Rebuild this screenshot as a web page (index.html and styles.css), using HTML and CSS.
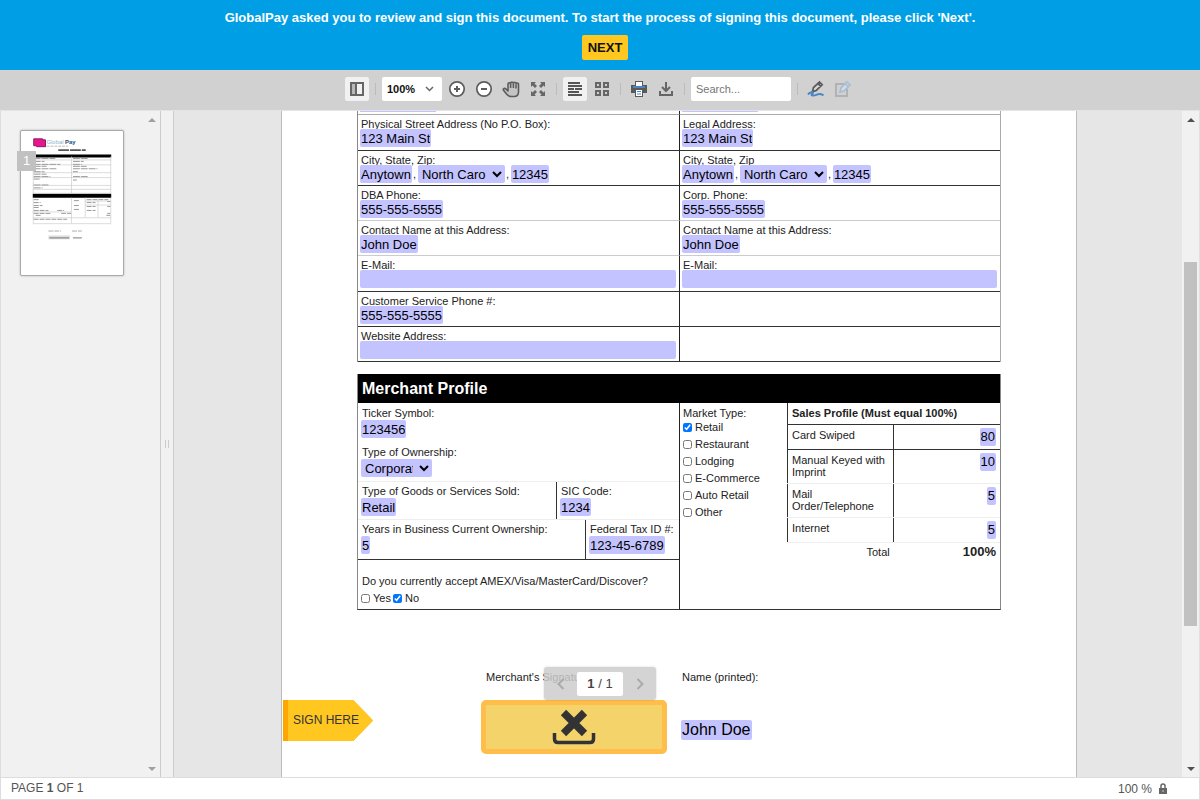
FILE: index.html
```html
<!DOCTYPE html>
<html lang="en">

<head>
    <meta charset="utf-8">
    <title>GlobalPay - Sign document</title>
    <link rel="stylesheet" href="styles.css">
</head>

<body>

    <header class="banner">
        <p>GlobalPay asked you to review and sign this document. To start the process of signing this document, please click 'Next'.</p>
        <button class="next">NEXT</button>
    </header>

    <nav class="toolbar">
        <button class="tool active" aria-label="Toggle panel">
            <svg width="16" height="16" viewBox="0 0 16 16"><path d="M2 2h5v12H2z" fill="#b9b9b9"/><path d="M2 2h12v12H2zM7 2v12" fill="none" stroke="#666" stroke-width="2"/></svg>
        </button>
        <span class="divider"></span>
        <div class="tools">
            <div class="zoom">
                <select aria-label="Zoom"><option>100%</option></select>
                <svg width="9" height="6" viewBox="0 0 9 6"><path d="M1 1l3.500 3.500L8 1" fill="none" stroke="#666" stroke-width="1.500"/></svg>
            </div>
            <button class="tool" aria-label="Zoom in">
                <svg width="18" height="18" viewBox="0 0 18 18"><circle cx="9" cy="9" r="7.200" fill="#fff" stroke="#5c5c5c" stroke-width="1.700"/><path d="M6 9h6M9 6v6" stroke="#5c5c5c" stroke-width="2"/></svg>
            </button>
            <button class="tool" aria-label="Zoom out">
                <svg width="18" height="18" viewBox="0 0 18 18"><circle cx="9" cy="9" r="7.200" fill="#fff" stroke="#5c5c5c" stroke-width="1.700"/><path d="M6 9h6" stroke="#5c5c5c" stroke-width="2"/></svg>
            </button>
            <button class="tool" aria-label="Pan">
                <svg width="18" height="18" viewBox="0 0 18 18"><path d="M6 9.500V4q0-1.300 1.300-1.300T8.600 4q0-2 1.400-2t1.400 1.700q0-1.400 1.400-1.400t1.400 1.700q0-1 1.200-1T16.500 4.500V12q0 4.500-4.500 4.500H9.500q-3 0-5-2.500L1.500 10.300q-.6-1.200.5-1.700t1.800.3L6 11z" fill="#c4c4c4" stroke="#5c5c5c" stroke-width="1.600" stroke-linejoin="round"/><path d="M8.600 4v4M11.400 4v4M14 4.500V8.500" stroke="#5c5c5c" stroke-width="1.500"/></svg>
            </button>
            <button class="tool" aria-label="Full screen">
                <svg width="16" height="16" viewBox="0 0 16 16"><path d="M1 1h5L4.500 2.500 7 5 5 7 2.500 4.500 1 6zM15 1h-5l1.500 1.500L9 5l2 2 2.500-2.500L15 6zM1 15h5l-1.500-1.500L7 11 5 9l-2.500 2.500L1 10zM15 15h-5l1.500-1.500L9 11l2-2 2.500 2.500L15 10z" fill="#666"/></svg>
            </button>
        </div>
        <span class="divider"></span>
        <div class="tools">
            <button class="tool active" aria-label="Single page">
                <svg width="14" height="14" viewBox="0 0 14 14"><path d="M0 1h12M0 4h14M0 7h6M7 7h7M0 10h11M0 13h14" stroke="#555" stroke-width="2"/></svg>
            </button>
            <button class="tool" aria-label="Thumbnails">
                <svg width="16" height="16" viewBox="0 0 16 16"><path d="M2 2h4v4H2zM10 2h4v4h-4zM2 10h4v4H2zM10 10h4v4h-4z" fill="none" stroke="#666" stroke-width="2"/></svg>
            </button>
        </div>
        <span class="divider"></span>
        <div class="tools">
            <button class="tool" aria-label="Print">
                <svg width="16" height="16" viewBox="0 0 16 16"><path d="M0 4h16v8H0z" fill="#5a5a5a"/><path d="M4 0h8v5H4z" fill="#5a5a5a"/><path d="M5 1h6v4H5z" fill="#fff"/><path d="M2 6h12" stroke="#4a86c5" stroke-width="2"/><path d="M4 9h8v7H4z" fill="#5a5a5a"/><path d="M5 9h6v6H5z" fill="#fff"/><path d="M6 10.500h4M6 13h4" stroke="#4a86c5"/></svg>
            </button>
            <button class="tool" aria-label="Download">
                <svg width="16" height="16" viewBox="0 0 16 16"><path d="M8 1v9M4 6l4 4 4-4M2 10v4h12v-4" fill="none" stroke="#666" stroke-width="2"/></svg>
            </button>
        </div>
        <span class="divider"></span>
        <input class="search" type="text" placeholder="Search..." aria-label="Search">
        <span class="divider"></span>
        <div class="tools">
            <button class="tool" aria-label="Sign">
                <svg width="18" height="18" viewBox="0 0 18 18"><path d="M5.500 11.500l1-4L12.500 2l2.700 2.700L9 10.700zM11 3.700l2.700 2.700" fill="#d8d8d8" stroke="#5c5c5c" stroke-width="1.700"/><path d="M1 14.500c1.500-2.500 6-3 5-1.500-1 1.300-2.500 2-.5 2.500 3 .5 4-1.500 7-1.500 2 0 2.500.5 4 1.300" fill="none" stroke="#4a86c5" stroke-width="1.900"/></svg>
            </button>
            <button class="tool" aria-label="Edit" disabled>
                <svg width="18" height="18" viewBox="0 0 18 18"><path d="M13 9v7H2V4h8" fill="none" stroke="#b2b2b2" stroke-width="2"/><path d="M6 12l1-4 6-6 3 3-6 6zM11.500 4l3 3" fill="#d3dce5" stroke="#a5bdd5" stroke-width="1.700"/></svg>
            </button>
        </div>
    </nav>

    <div class="workspace">

        <aside class="sidebar">
            <a class="thumb" href="#document">
                <svg viewBox="0 0 104 147">
                    <path d="M13 8h9v1h3v7h-9v-1h-3z" fill="#e6178c" stroke="#8b1763"/>
                    <text x="26" y="13" class="mini-logo">Global <tspan class="mini-pay">Pay</tspan></text>
                    <path d="M26 15.500h22" stroke="#bbb" stroke-width="1" stroke-dasharray="3 1"/>
                    <path d="M38 19.500h28" stroke="#555" stroke-width="2" stroke-dasharray="11 1"/>
                    <path d="M12 24h80v3H12zM12 64h80v4H12z"/>
                    <path d="M12.500 26v38M91.500 26v38M51.500 26v38M12.500 68v26M91.500 68v26M51.500 68v26M65.500 68v20M78.500 70v18M12 29.500h80M12 34.500h80M12 42.500h80M12 47.500h80M12 55.500h80M12 59.500h80M12 63.500h80M12 82.500h39M12 88.500h80M65 71.500h27M65 75.500h27M12 94.500h80" fill="none" stroke="#ccc" stroke-width=".7"/>
                    <path d="M13 28h22M13 31h11M13 34h27M13 36h13M13 38.500h24M13 41.500h11M13 44h13M13 46.500h17M13 49h6M13 55h15M13 58h9M53 28h15M53 31h11M53 34h9M53 36h14M53 38.500h25M53 41.500h5M53 46.500h15M53 50h4" stroke="#999" stroke-dasharray="7 1"/>
                    <path d="M13 70h5M13 73h7M13 76h9M13 78h6M13 81h15M13 84h17M37 81h7M41 84h10M13 90h34M54 71h5M54 76h5M54 80h5M67 70h22M67 73h9M67 77h9M67 81h9M88 72h3M88 77h3M88 84h3M87 86h4M15 86h6" stroke="#999" stroke-dasharray="5 1"/>
                    <path d="M28 102h13M52 102h10" stroke="#aaa" stroke-dasharray="5 1"/>
                    <path d="M28 108.500h22" stroke="#ddd" stroke-width="4"/>
                    <path d="M29 109h20M53 109h9" stroke="#777"/>
                </svg>
                <span class="thumb-number">1</span>
            </a>
            <div class="side-scroll">
                <span class="arrow up"></span>
                <span class="arrow down"></span>
            </div>
        </aside>

        <div class="splitter"><span class="grip"></span></div>

        <main class="viewer">
            <form class="page" id="document">

                <div class="contact">
                    <div class="cell clipped"><span></span></div>
                    <div class="cell clipped"><span></span></div>

                    <div class="cell dark">
                        <label for="street">Physical Street Address (No P.O. Box):</label>
                        <div class="line"><input class="field" id="street" value="123 Main St"></div>
                    </div>
                    <div class="cell dark">
                        <label for="legal">Legal Address:</label>
                        <div class="line"><input class="field" id="legal" value="123 Main St"></div>
                    </div>

                    <div class="cell dark">
                        <label for="city">City, State, Zip:</label>
                        <div class="line">
                            <input class="field" id="city" value="Anytown"><span class="comma">,</span>
                            <select class="field state" aria-label="State"><option>North Carolina</option></select><span class="comma">,</span>
                            <input class="field" value="12345" aria-label="Zip">
                        </div>
                    </div>
                    <div class="cell dark">
                        <label for="legal-city">City, State, Zip</label>
                        <div class="line">
                            <input class="field" id="legal-city" value="Anytown"><span class="comma">,</span>
                            <select class="field state" aria-label="Legal state"><option>North Carolina</option></select><span class="comma">,</span>
                            <input class="field" value="12345" aria-label="Legal zip">
                        </div>
                    </div>

                    <div class="cell">
                        <label for="dba-phone">DBA Phone:</label>
                        <div class="line"><input class="field" id="dba-phone" value="555-555-5555"></div>
                    </div>
                    <div class="cell">
                        <label for="corp-phone">Corp. Phone:</label>
                        <div class="line"><input class="field" id="corp-phone" value="555-555-5555"></div>
                    </div>

                    <div class="cell">
                        <label for="contact">Contact Name at this Address:</label>
                        <div class="line"><input class="field" id="contact" value="John Doe"></div>
                    </div>
                    <div class="cell">
                        <label for="legal-contact">Contact Name at this Address:</label>
                        <div class="line"><input class="field" id="legal-contact" value="John Doe"></div>
                    </div>

                    <div class="cell dark">
                        <label for="email">E-Mail:</label>
                        <div class="line"><input class="field wide" id="email"></div>
                    </div>
                    <div class="cell dark">
                        <label for="legal-email">E-Mail:</label>
                        <div class="line"><input class="field wide" id="legal-email"></div>
                    </div>

                    <div class="cell dark">
                        <label for="service-phone">Customer Service Phone #:</label>
                        <div class="line"><input class="field" id="service-phone" value="555-555-5555"></div>
                    </div>
                    <div class="cell dark"></div>

                    <div class="cell dark">
                        <label for="website">Website Address:</label>
                        <div class="line"><input class="field wide" id="website"></div>
                    </div>
                    <div class="cell dark"></div>
                </div>

                <section class="merchant">
                    <h2>Merchant Profile</h2>
                    <div class="merchant-body">

                        <div class="business">
                            <div class="block first">
                                <div class="group">
                                    <label for="ticker">Ticker Symbol:</label>
                                    <div class="line"><input class="field" id="ticker" value="123456"></div>
                                </div>
                                <div class="group">
                                    <label for="ownership">Type of Ownership:</label>
                                    <div class="line"><select class="field ownership" id="ownership"><option>Corporation</option></select></div>
                                </div>
                            </div>
                            <div class="split goods">
                                <div class="block">
                                    <label for="goods">Type of Goods or Services Sold:</label>
                                    <div class="line"><input class="field" id="goods" value="Retail"></div>
                                </div>
                                <div class="block">
                                    <label for="sic">SIC Code:</label>
                                    <div class="line"><input class="field" id="sic" value="1234"></div>
                                </div>
                            </div>
                            <div class="split years">
                                <div class="block">
                                    <label for="years">Years in Business Current Ownership:</label>
                                    <div class="line"><input class="field" id="years" value="5"></div>
                                </div>
                                <div class="block">
                                    <label for="tax">Federal Tax ID #:</label>
                                    <div class="line"><input class="field" id="tax" value="123-45-6789"></div>
                                </div>
                            </div>
                            <div class="cards">
                                <p>Do you currently accept AMEX/Visa/MasterCard/Discover?</p>
                                <div class="choices">
                                    <label class="check"><input type="checkbox">Yes</label>
                                    <label class="check"><input type="checkbox" checked>No</label>
                                </div>
                            </div>
                        </div>

                        <div class="market">
                            <p>Market Type:</p>
                            <label class="check"><input type="checkbox" checked>Retail</label>
                            <label class="check"><input type="checkbox">Restaurant</label>
                            <label class="check"><input type="checkbox">Lodging</label>
                            <label class="check"><input type="checkbox">E-Commerce</label>
                            <label class="check"><input type="checkbox">Auto Retail</label>
                            <label class="check"><input type="checkbox">Other</label>
                        </div>

                        <table class="sales">
                            <thead>
                                <tr><th colspan="2">Sales Profile (Must equal 100%)</th></tr>
                            </thead>
                            <tbody>
                                <tr class="dark">
                                    <td><label for="swiped">Card Swiped</label></td>
                                    <td><input class="field" id="swiped" value="80"></td>
                                </tr>
                                <tr class="tall">
                                    <td><label for="keyed">Manual Keyed with Imprint</label></td>
                                    <td><input class="field" id="keyed" value="10"></td>
                                </tr>
                                <tr class="tall">
                                    <td><label for="mail">Mail Order/Telephone</label></td>
                                    <td><input class="field" id="mail" value="5"></td>
                                </tr>
                                <tr>
                                    <td><label for="internet">Internet</label></td>
                                    <td><input class="field" id="internet" value="5"></td>
                                </tr>
                            </tbody>
                            <tfoot>
                                <tr>
                                    <td>Total</td>
                                    <td class="sum">100%</td>
                                </tr>
                            </tfoot>
                        </table>
                    </div>
                </section>

                <section class="signature">
                    <div class="sign-column">
                        <span class="caption">Merchant's Signature:</span>
                        <button class="sign-box" type="button" aria-label="Sign">
                            <svg width="44" height="36" viewBox="0 0 44 36"><path d="M11.500 3.500l21 21M32.500 3.500l-21 21" stroke="#333" stroke-width="7.500"/><path d="M2.500 24v6q0 3.500 3.500 3.500h32q3.500 0 3.500-3.500v-6" fill="none" stroke="#333" stroke-width="3.500"/></svg>
                        </button>
                    </div>
                    <div class="name-column">
                        <label for="printed">Name (printed):</label>
                        <input class="field large" id="printed" value="John Doe">
                    </div>
                </section>

                <a class="sign-here" href="#printed"><span>SIGN HERE</span></a>
            </form>

            <div class="pager">
                <button aria-label="Previous page"><svg width="8" height="12" viewBox="0 0 8 12"><path d="M6.500 1l-5 5 5 5" fill="none" stroke="#aaa" stroke-width="2"/></svg></button>
                <span class="pages"><b>1</b> / 1</span>
                <button aria-label="Next page"><svg width="8" height="12" viewBox="0 0 8 12"><path d="M1.500 1l5 5-5 5" fill="none" stroke="#aaa" stroke-width="2"/></svg></button>
            </div>
        </main>

        <div class="scrollbar">
            <span class="arrow up"></span>
            <div class="track"><div class="handle"></div></div>
            <span class="arrow down"></span>
        </div>
    </div>

    <footer class="status">
        <span>PAGE <b>1</b> OF 1</span>
        <span class="status-zoom">100 %
            <svg width="8" height="11" viewBox="0 0 8 11"><path d="M2 5V3q0-2 2-2t2 2v2" fill="none" stroke="#666" stroke-width="1.500"/><path d="M0 5h8v6H0z" fill="#666"/><path d="M3.500 7h1v2h-1z" fill="#ccc"/></svg>
        </span>
    </footer>

</body>

</html>
```
FILE: styles.css
```css
* {
    box-sizing: border-box;
}

body {
    margin: 0;
    height: 100vh;
    display: flex;
    flex-direction: column;
    overflow: hidden;
    font-family: "Liberation Sans", Arial, sans-serif;
    font-size: 11px;
    color: #222;
}

p,
h2 {
    margin: 0;
}

button,
input,
select {
    font-family: inherit;
    margin: 0;
}

svg {
    display: block;
}

/* banner */

.banner {
    display: flex;
    flex-direction: column;
    align-items: center;
    gap: 9px;
    padding: 10px 16px;
    background-color: #009fe5;
    color: #fff;
    font-size: 13px;
    font-weight: bold;
    line-height: 16px;
}

.next {
    height: 25px;
    padding: 0 6px;
    margin-left: 10px;
    border: none;
    border-radius: 2px;
    background-color: #ffc720;
    color: #111;
    font-size: 13px;
    font-weight: bold;
}

/* toolbar */

.toolbar {
    display: flex;
    justify-content: center;
    align-items: center;
    height: 41px;
    padding-bottom: 2px;
    background-color: #d1d1d1;
    border-bottom: 1px solid #e4e4e4;
}

.tools {
    display: flex;
    gap: 3px;
}

.tool {
    display: flex;
    align-items: center;
    justify-content: center;
    width: 24px;
    height: 24px;
    padding: 0;
    border: none;
    border-radius: 2px;
    background: none;
}

.tool.active {
    background-color: #f1f1f1;
}

.divider {
    width: 1px;
    height: 12px;
    margin: 0 6px;
    background-color: #bbb;
}

.zoom {
    position: relative;
    width: 60px;
}

.zoom select {
    appearance: none;
    width: 100%;
    height: 24px;
    padding: 0 5px;
    border: none;
    border-radius: 2px;
    background-color: #fff;
    color: #111;
    font-size: 11px;
    font-weight: bold;
}

.zoom svg {
    position: absolute;
    right: 8px;
    top: 9px;
}

.search {
    width: 100px;
    height: 24px;
    padding: 0 5px;
    border: none;
    border-radius: 2px;
    font-size: 11px;
}

/* workspace */

.workspace {
    flex: 1;
    min-height: 0;
    display: flex;
}

.sidebar {
    display: flex;
    justify-content: space-between;
    width: 161px;
    padding: 19px 0 0 19px;
    background-color: #f1f1f1;
    border-left: 1px solid #ddd;
    border-right: 1px solid #ccc;
}

.thumb {
    position: relative;
    align-self: flex-start;
    width: 104px;
    background-color: #fff;
    border: 1px solid #aaa;
    border-radius: 2px;
    box-shadow: 0 0 2px rgba(0, 0, 0, 0.3);
}

.thumb-number {
    position: absolute;
    top: 20px;
    left: -4px;
    width: 19px;
    background-color: #c1c1c1;
    color: #fff;
    font-size: 13px;
    line-height: 20px;
    text-align: center;
}

.mini-logo {
    font-size: 6px;
    fill: #8fb4cc;
}

.mini-pay {
    font-weight: bold;
    fill: #1f4e79;
}

.side-scroll {
    display: flex;
    flex-direction: column;
    justify-content: space-between;
    width: 17px;
    margin-top: -19px;
}

.arrow {
    display: flex;
    align-items: center;
    justify-content: center;
    height: 17px;
}

.arrow::before {
    content: "";
    border: 4px solid transparent;
    border-top-width: 0;
    border-bottom-color: #505050;
}

.arrow.down::before {
    border-width: 4px 4px 0;
    border-top-color: #505050;
}

.side-scroll .arrow::before {
    border-bottom-color: #a0a0a0;
    border-top-color: #a0a0a0;
}

.splitter {
    display: flex;
    align-items: center;
    justify-content: center;
    width: 13px;
    background-color: #f1f1f1;
    border-right: 1px solid #ccc;
}

.grip {
    width: 4px;
    height: 8px;
    border: solid #ccc;
    border-width: 0 1px;
}

.viewer {
    position: relative;
    flex: 1;
    overflow: hidden;
    display: flex;
    justify-content: center;
    padding-left: 2px;
    background-color: #e6e6e6;
}

.page {
    position: relative;
    width: 796px;
    padding: 0 75px;
    background-color: #fff;
    border: solid #bbb;
    border-width: 0 1px;
}

.scrollbar {
    display: flex;
    flex-direction: column;
    width: 18px;
    background-color: #f1f1f1;
    border-right: 1px solid #e0e0e0;
}

.track {
    flex: 1;
    padding: 0 2px;
    display: flex;
    flex-direction: column;
}

.track::before,
.track::after {
    content: "";
    flex: 21;
}

.handle {
    flex: 57;
    background-color: #c1c1c1;
}

/* form fields */

.line {
    display: flex;
}

.field {
    field-sizing: content;
    height: 18px;
    padding: 0 1px;
    border: none;
    border-radius: 2px;
    background-color: #c3c3ff;
    color: #000;
    font-size: 13px;
}

.wide {
    field-sizing: fixed;
    width: 100%;
}

.large {
    height: 20px;
    font-size: 16px;
}

.state,
.ownership {
    field-sizing: fixed;
    width: 87px;
    padding: 0 3px 0 0;
}

.ownership {
    width: 71px;
}

.comma {
    width: 6px;
    padding-left: 1px;
    line-height: 18px;
}

.check {
    display: flex;
    align-items: center;
    gap: 3px;
}

.check input {
    width: 9px;
    height: 9px;
}

/* contact details */

.contact {
    display: grid;
    grid-template-columns: 322px 1fr;
    grid-template-rows: 4px 36px 35px 35px 35px 36px 35px 35px;
    border-left: 1px solid #888;
    border-right: 1px solid #aaa;
}

.cell {
    padding: 4px 3px 0 2px;
    border-bottom: 1px solid #ccc;
}

.cell:nth-child(odd) {
    border-right: 1px solid #222;
}

.cell label,
.block label {
    display: block;
    padding-left: 1px;
    line-height: 10px;
}

.cell.dark {
    border-bottom-color: #333;
}

.cell.clipped {
    padding: 0 2px;
    border-bottom-color: #aaa;
}

.clipped span {
    display: block;
    width: 76px;
    height: 1px;
    background-color: #c3c3ff;
}

/* merchant profile */

.merchant {
    margin-top: 12px;
    border: solid #888;
    border-width: 0 1px;
    border-bottom: 1px solid #333;
}

.merchant h2 {
    padding: 0 4px;
    background-color: #000;
    color: #fff;
    font-size: 16px;
    line-height: 29px;
}

.merchant-body {
    display: grid;
    grid-template-columns: 322px 107px 1fr;
}

.business {
    border-right: 1px solid #222;
}

.block {
    padding: 4px 2px 3px 3px;
}

.block label {
    margin-bottom: 2px;
}

.first {
    display: grid;
    gap: 9px;
    padding-top: 5px;
    padding-bottom: 4px;
}

.split {
    display: grid;
    border-top: 1px solid #eee;
}

.goods {
    grid-template-columns: 1fr 123px;
}

.years {
    grid-template-columns: 1fr 94px;
    border-bottom: 1px solid #333;
}

.years .block {
    padding-bottom: 5px;
}

.split .block + .block {
    border-left: 1px solid #333;
}

.cards {
    padding: 15px 3px 5px;
    line-height: 12px;
}

.cards p {
    padding-left: 1px;
    margin-bottom: 5px;
}

.choices {
    display: flex;
    gap: 2px;
}

.market {
    padding: 4px 3px;
    line-height: 17px;
}

.market p {
    line-height: 12px;
}

.sales {
    align-self: start;
    width: 100%;
    border-collapse: collapse;
}

.sales th {
    height: 21px;
    padding: 0 4px;
    border-left: 1px solid #333;
    border-bottom: 1px solid #333;
    text-align: left;
}

.sales td {
    padding: 3px 4px;
    height: 25px;
    vertical-align: top;
    line-height: 12px;
}

.sales tbody td {
    border-left: 1px solid #333;
    border-bottom: 1px solid #eee;
}

.sales td:first-child {
    width: 50%;
}

.sales td + td {
    text-align: right;
}

.sales .field {
    display: block;
    margin-left: auto;
}

.sales label {
    display: block;
    margin-top: 1px;
}

.sales .dark td {
    border-bottom-color: #333;
}

.sales .tall td {
    height: 34px;
}

.sales tfoot td {
    padding-bottom: 0;
    text-align: right;
}

.sales .sum {
    font-size: 13px;
    font-weight: bold;
}

/* signature */

.signature {
    display: flex;
    gap: 14px;
    padding: 61px 0 0 124px;
}

.sign-column {
    display: flex;
    flex-direction: column;
    width: 186px;
}

.caption {
    padding-left: 5px;
    margin-bottom: 17px;
    line-height: 12px;
}

.sign-box {
    display: flex;
    align-items: center;
    justify-content: center;
    height: 54px;
    padding: 0;
    border: 5px solid #ffbd4a;
    border-radius: 5px;
    background-color: #f5d36b;
}

.name-column {
    display: flex;
    flex-direction: column;
    align-items: flex-start;
    gap: 37px;
}

.name-column label {
    padding-left: 1px;
    line-height: 12px;
}

/* tag pinned over the page margin */
.sign-here {
    position: absolute;
    left: 1px;
    top: 589px;
    width: 90px;
    height: 41px;
    padding-left: 5px;
    background-color: #ffa500;
    clip-path: polygon(0 0, 78% 0, 100% 50%, 78% 100%, 0 100%);
    color: #333;
    font-size: 12px;
    line-height: 41px;
    text-decoration: none;
}

.sign-here span {
    display: block;
    padding-left: 5px;
    background-color: #ffc720;
}

/* page switcher floating over the document */
.pager {
    position: absolute;
    bottom: 77px;
    left: 50%;
    margin-left: -134px;
    display: flex;
    align-items: center;
    justify-content: space-between;
    width: 112px;
    height: 33px;
    border-radius: 3px;
    background-color: rgba(205, 205, 205, 0.85);
    box-shadow: 0 0 2px rgba(0, 0, 0, 0.2);
}

.pager button {
    display: flex;
    justify-content: center;
    width: 33px;
    padding: 0;
    border: none;
    background: none;
}

.pages {
    width: 46px;
    background-color: #fff;
    border-radius: 2px;
    color: #444;
    font-size: 13px;
    line-height: 24px;
    text-align: center;
}

/* status bar */

.status {
    display: flex;
    justify-content: space-between;
    height: 23px;
    padding: 0 32px 0 10px;
    border: 1px solid #ddd;
    color: #555;
    font-size: 12px;
    line-height: 20px;
}

.status-zoom {
    display: flex;
    align-items: center;
    gap: 7px;
}
```
